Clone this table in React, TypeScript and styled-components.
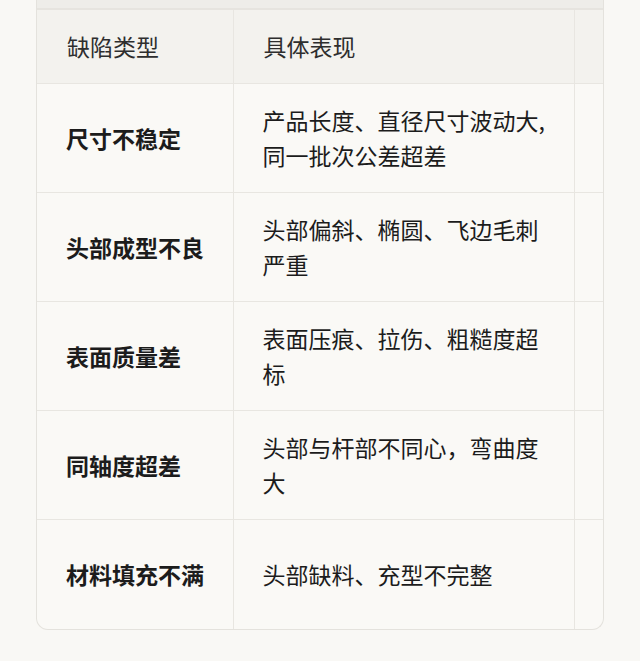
import React from "react";
import styled, { createGlobalStyle } from "styled-components";

const Global = createGlobalStyle`
  html, body { margin: 0; padding: 0; background: #f9f8f5; }
  body { font-family: "Noto Sans CJK SC", "Noto Sans", sans-serif; }
`;

const Page = styled.div`
  padding: 0 36px 0 36px;
  height: 661px;
  box-sizing: border-box;
  overflow: hidden;
`;

const Card = styled.div`
  width: 568px;
  box-sizing: border-box;
  border: 1px solid #e4e2dd;
  border-top: none;
  border-radius: 0 0 12px 12px;
  background: #faf9f6;
  overflow: hidden;
`;

const TopBand = styled.div`
  height: 8px;
  background: #eeede9;
  border-bottom: 2px solid #e6e4df;
`;

const Table = styled.table`
  border-collapse: collapse;
  table-layout: fixed;
  width: 797px;
`;

const HeadCell = styled.th<{ $w: number }>`
  width: ${(p) => p.$w}px;
  box-sizing: border-box;
  background: #f3f2ee;
  color: #2e2e2e;
  font-weight: 400;
  font-size: 23px;
  line-height: 35px;
  text-align: left;
  padding: 19px 19px 19px 30px;
  border-right: 1px solid #e8e6e1;
  border-bottom: 1px solid #e8e6e1;
  vertical-align: middle;
  white-space: nowrap;
`;

const Cell = styled.td<{ $bold?: boolean }>`
  box-sizing: border-box;
  height: 109px;
  color: #1c1c1c;
  font-weight: ${(p) => (p.$bold ? 700 : 400)};
  font-size: 23px;
  line-height: 35px;
  padding: 19px 19px 19px 29px;
  border-right: 1px solid #e8e6e1;
  border-bottom: 1px solid #e8e6e1;
  vertical-align: middle;
`;

const Row = styled.tr`
  &:last-child td { border-bottom: none; }
`;

const rows = [
  ["尺寸不稳定", "产品长度、直径尺寸波动大,同一批次公差超差", "模具磨损、送料不稳定"],
  ["头部成型不良", "头部偏斜、椭圆、飞边毛刺严重", "模具对中不良、冲头磨损"],
  ["表面质量差", "表面压痕、拉伤、粗糙度超标", "润滑不足、模具表面损伤"],
  ["同轴度超差", "头部与杆部不同心，弯曲度大", "夹模松动、设备精度下降"],
  ["材料填充不满", "头部缺料、充型不完整", "坯料体积不足、压力不够"],
];

export default function App() {
  return (
    <>
      <Global />
      <Page>
        <Card>
          <TopBand />
          <Table>
            <thead>
              <tr>
                <HeadCell $w={196}>缺陷类型</HeadCell>
                <HeadCell $w={341}>具体表现</HeadCell>
                <HeadCell $w={260}>可能原因</HeadCell>
              </tr>
            </thead>
            <tbody>
              {rows.map((r) => (
                <Row key={r[0]}>
                  <Cell $bold>{r[0]}</Cell>
                  <Cell>{r[1]}</Cell>
                  <Cell>{r[2]}</Cell>
                </Row>
              ))}
            </tbody>
          </Table>
        </Card>
      </Page>
    </>
  );
}
